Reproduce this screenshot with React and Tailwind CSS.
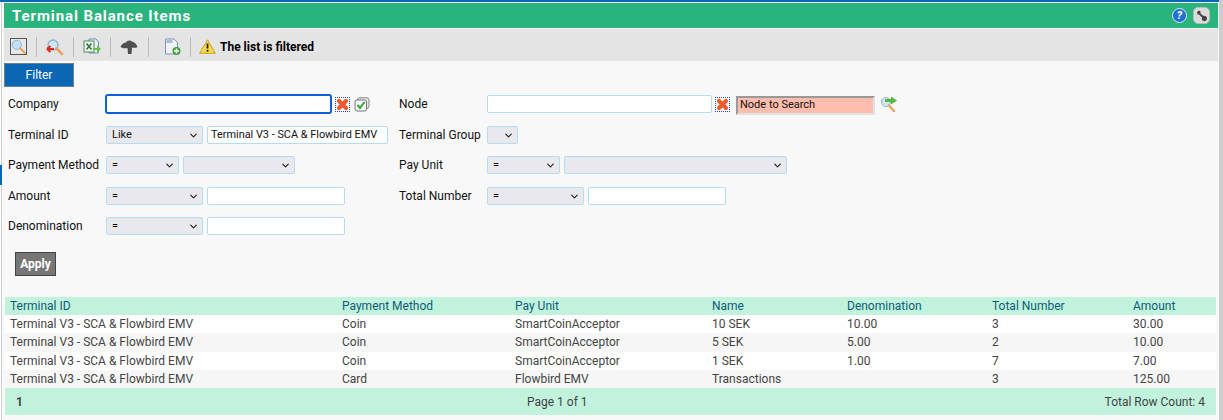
import React from 'react';
import { ChevronDown } from 'lucide-react';

// Toolbar and inline icons
const MagnifierIcon = ({ accent }) => (
  <svg width="18" height="18" viewBox="0 0 18 18">
    <circle cx="7" cy="7" r="5" fill="#cfe6f5" stroke="#8fb4cc" strokeWidth="1.4" />
    <path d="M10.5 10.5 L16 16" stroke="#e9a35c" strokeWidth="2.6" strokeLinecap="round" />
    {accent}
  </svg>
);

const SearchBoxIcon = () => (
  <span className="flex h-[17px] w-[17px] items-center justify-center border border-[#555] bg-[#e8e8e8]">
    <svg width="15" height="15" viewBox="0 0 18 18">
      <circle cx="7" cy="7" r="5.5" fill="#bfe0f6" stroke="#8fb4cc" strokeWidth="1.2" />
      <path d="M11 11 L16.5 16.5" stroke="#e9a35c" strokeWidth="2.6" strokeLinecap="round" />
    </svg>
  </span>
);

const ClearFilterIcon = () => (
  <MagnifierIcon accent={<path d="M1 11 H8 M1 11 L4.5 8 M1 11 L4.5 14" stroke="#d9281e" strokeWidth="2" fill="none" />} />
);

const ExportIcon = () => (
  <svg width="18" height="18" viewBox="0 0 18 18">
    <path d="M6 1 H13 L15.500 4 V15 H6 Z" fill="#e6eef6" stroke="#6f8fb4" />
    <rect x="1" y="3" width="10" height="11" fill="#f4f8f2" stroke="#4c8a55" />
    <path d="M3.500 5.500 L8.500 11.500 M8.500 5.500 L3.500 11.500" stroke="#2b7a3a" strokeWidth="1.600" />
    <path d="M10 10 H14 V7.500 L18 11 L14 14.500 V12 H10 Z" fill="#6cc04a" />
  </svg>
);

const UploadCloudIcon = () => (
  <svg width="18" height="16" viewBox="0 0 18 16">
    <path d="M0.500 8 C1.500 5 4 3.500 6 3.500 C7 1.500 10 0.500 12 2.500 C14.500 3 16.500 5 17.500 8 C16 9 13.500 9 12 8.500 L11.500 15 H8 L7.500 9 C5.500 9.500 2.500 9.500 0.500 8 Z" fill="#4f4f4f" />
  </svg>
);

const NewPageIcon = () => (
  <svg width="17" height="18" viewBox="0 0 17 18">
    <path d="M1.500 1 H10 L13.500 4.500 V16 H1.500 Z" fill="#eef2f8" stroke="#7f93b2" />
    <rect x="2.500" y="2" width="6" height="3" fill="#a9bcd6" />
    <circle cx="12.500" cy="13" r="4" fill="#3f9e36" />
    <path d="M12.500 10.500 V15.500 M10 13 H15" stroke="#fff" strokeWidth="1.600" />
  </svg>
);

const WarningIcon = () => (
  <svg width="17" height="15" viewBox="0 0 17 15">
    <path d="M8.500 0.800 L16.400 14.300 H0.600 Z" fill="#f7d94c" stroke="#c9a227" strokeLinejoin="round" />
    <path d="M8.500 4.500 V9.500" stroke="#222" strokeWidth="1.800" />
    <rect x="7.600" y="10.800" width="1.800" height="1.800" fill="#222" />
  </svg>
);

const ClearIcon = () => (
  <span className="flex h-[15px] w-[15px] items-center justify-center border border-dotted border-[#1e50b4]">
    <svg width="13" height="13" viewBox="0 0 13 13">
      <path d="M3 3 L10 10 M10 3 L3 10" stroke="#ee5a2b" strokeWidth="4.200" strokeLinecap="round" />
    </svg>
  </span>
);

const CheckIcon = () => (
  <svg width="16" height="15" viewBox="0 0 16 15">
    <rect x="3.500" y="0.800" width="11.500" height="10.500" rx="2" fill="#e4e4e4" stroke="#888" />
    <rect x="1" y="3" width="11.500" height="11" rx="2" fill="#f5f5f5" stroke="#777" />
    <path d="M3.500 8 L6 11 L10.500 5" stroke="#2fa83a" strokeWidth="2" fill="none" />
  </svg>
);

const NodeSearchIcon = () => (
  <svg width="18" height="16" viewBox="0 0 18 16">
    <circle cx="6" cy="6" r="4.500" fill="#cfe6f5" stroke="#8fb4cc" />
    <path d="M9 9.500 L14 15" stroke="#e9a35c" strokeWidth="2.400" strokeLinecap="round" />
    <path d="M5 3 H11 V0.500 L17 4.500 L11 8.500 V6 H5 Z" fill="#55b83a" />
  </svg>
);

const HelpIcon = () => (
  <span className="flex h-[15px] w-[15px] items-center justify-center rounded-full border border-[#dfe8f5] bg-[#1f6fd6] text-[11px] font-bold italic leading-none text-white">?</span>
);

const ToolsIcon = () => (
  <span className="flex h-[17px] w-[17px] items-center justify-center rounded-[5px] border border-[#bbb] bg-[#dcdcdc]">
    <svg width="12" height="12" viewBox="0 0 12 12">
      <path d="M1 2 L3 0.500 L4.500 1.500 L4.500 3.500 L7.500 6 C9 5.500 11 6.500 11 8.500 C11 10.500 9 11.500 7.500 11 C6 10.500 5.500 9 6 7.500 L3 4.500 L1.500 4.500 Z" fill="#444" />
    </svg>
  </span>
);

const ToolbarSep = () => <span className="mx-[9px] h-[20px] w-px bg-[#bdbdbd]" />;

const Select = ({ value = '', width }) => (
  <div className={`flex h-[18px] items-center justify-between rounded-[2px] border border-[#b5dcf7] bg-[#e9e9ed] pl-[5px] pr-[3px] text-[11px] text-[#111] ${width}`}>
    <span>{value}</span>
    <ChevronDown size={11} strokeWidth={2.500} className="text-[#222]" />
  </div>
);

const TextInput = ({ value = '', width }) => (
  <div className={`flex h-[18px] items-center rounded-[2px] border border-[#b5dcf7] bg-white px-[3px] text-[10.9px] text-[#111] ${width}`}>
    {value}
  </div>
);

const Label = ({ children, width }) => (
  <span className={`shrink-0 text-[12px] text-[#111] ${width}`}>{children}</span>
);

const columns = ['Terminal ID', 'Payment Method', 'Pay Unit', 'Name', 'Denomination', 'Total Number', 'Amount'];
const widths = ['w-[332px]', 'w-[173px]', 'w-[197px]', 'w-[135px]', 'w-[145px]', 'w-[141px]', 'w-[88px]'];

const terminal = 'Terminal V3 - SCA & Flowbird EMV';
const rows = [
  [terminal, 'Coin', 'SmartCoinAcceptor', '10 SEK', '10.00', '3', '30.00'],
  [terminal, 'Coin', 'SmartCoinAcceptor', '5 SEK', '5.00', '2', '10.00'],
  [terminal, 'Coin', 'SmartCoinAcceptor', '1 SEK', '1.00', '7', '7.00'],
  [terminal, 'Card', 'Flowbird EMV', 'Transactions', '', '3', '125.00'],
];

export default function App() {
  return (
    <div className="relative h-[420px] w-[1223px] overflow-hidden bg-white font-['Roboto',sans-serif]">
      <div className="mr-[4px] h-[2px] bg-[#0a67b3]" />

      <div className="ml-[1px] mr-[4px] border-l border-[#cfcfcf] bg-[#f8f8f8]">
        <div className="bg-white pl-[2px] pr-[1px] pt-px">
          <div className="flex h-[25px] items-center justify-between bg-[#29b47e] pl-[8px] pr-[8px]">
            <h1 className="pt-[1px] text-[15px] font-bold tracking-[0.9px] text-white">Terminal Balance Items</h1>
            <div className="flex items-center gap-[6px]">
              <HelpIcon />
              <ToolsIcon />
            </div>
          </div>
        </div>

        <div className="ml-[2px] mr-px mt-[1px] flex h-[32px] items-center bg-[#e4e4e4] pl-[6px] pt-[3px]">
          <SearchBoxIcon />
          <ToolbarSep />
          <ClearFilterIcon />
          <ToolbarSep />
          <ExportIcon />
          <ToolbarSep />
          <UploadCloudIcon />
          <span className="w-px" />
          <ToolbarSep />
          <span className="ml-[6px]"><NewPageIcon /></span>
          <ToolbarSep />
          <span className="-ml-px flex items-center gap-[4px] text-[12px] font-bold text-black">
            <WarningIcon />
            The list is filtered
          </span>
        </div>

        <div className="ml-[2px] mt-[2px]">
          <div className="flex h-[24px] w-[70px] items-center justify-center border border-[#6d7f8e] bg-[#0a67b3] text-[12px] text-white">Filter</div>
        </div>

        <div className="ml-[6px] mt-[7px] flex flex-col">
          <div className="flex h-[20px] items-center">
            <Label width="w-[97px]">Company</Label>
            <div className="h-[20px] w-[227px] rounded-[3px] border-2 border-[#0b5fd8] bg-white" />
            <span className="ml-[3px] flex items-center gap-[4px]"><ClearIcon /><CheckIcon /></span>
            <Label width="ml-[29px] w-[88px]">Node</Label>
            <TextInput width="w-[225px]" />
            <span className="ml-[3px]"><ClearIcon /></span>
            <div className="ml-[6px] mt-[2px] flex h-[19px] w-[139px] items-center border-2 border-b-[#e2e2e2] border-l-[#999] border-r-[#e2e2e2] border-t-[#999] bg-[#ffbdae] pl-[2px] pt-[1px] text-[11px] text-[#111]">Node to Search</div>
            <span className="ml-[5px]"><NodeSearchIcon /></span>
          </div>

          <div className="mt-[12px] flex h-[18px] items-center">
            <Label width="w-[98px]">Terminal ID</Label>
            <Select value="Like" width="w-[97px]" />
            <span className="ml-[4px]"><TextInput value={terminal} width="w-[181px]" /></span>
            <Label width="ml-[11px] w-[88px]">Terminal Group</Label>
            <Select width="w-[31px]" />
          </div>

          <div className="mt-[12px] flex h-[18px] items-center">
            <Label width="w-[98px]">Payment Method</Label>
            <Select value="=" width="w-[73px]" />
            <span className="ml-[4px]"><Select width="w-[112px]" /></span>
            <Label width="ml-[104px] w-[88px]">Pay Unit</Label>
            <Select value="=" width="w-[73px]" />
            <span className="ml-[4px]"><Select width="w-[223px]" /></span>
          </div>

          <div className="mt-[13px] flex h-[18px] items-center">
            <Label width="w-[98px]">Amount</Label>
            <Select value="=" width="w-[97px]" />
            <span className="ml-[4px]"><TextInput width="w-[138px]" /></span>
            <Label width="ml-[54px] w-[88px]">Total Number</Label>
            <Select value="=" width="w-[97px]" />
            <span className="ml-[4px]"><TextInput width="w-[138px]" /></span>
          </div>

          <div className="mt-[12px] flex h-[18px] items-center">
            <Label width="w-[98px]">Denomination</Label>
            <Select value="=" width="w-[97px]" />
            <span className="ml-[4px]"><TextInput width="w-[138px]" /></span>
          </div>

          <button className="ml-[7px] mt-[17px] flex h-[24px] w-[41px] items-center justify-center border border-[#444] bg-[#777] text-[12px] font-bold text-white">Apply</button>
        </div>

        <div className="ml-[3px] mr-[2px] mt-[21px]">
          <table className="w-[1211px] table-fixed border-collapse text-left text-[12px] text-[#444]">
            <thead>
              <tr className="h-[18px] bg-[#c1f2dc] text-[#0f5c7a]">
                {columns.map((col, i) => (
                  <th key={col} className={`p-0 pl-[5px] font-normal ${widths[i]}`}>{col}</th>
                ))}
              </tr>
            </thead>
            <tbody>
              {rows.map((row, r) => (
                <tr key={r} className={r % 2 === 0 ? 'h-[18px] bg-white' : 'h-[18.500px] bg-[#f6f6f6]'}>
                  {row.map((cell, c) => (
                    <td key={c} className="p-0 pl-[5px]">{cell}</td>
                  ))}
                </tr>
              ))}
            </tbody>
          </table>
          <div className="grid h-[27px] w-[1211px] grid-cols-[511px_1fr_auto] items-center bg-[#c1f2dc] pl-[11px] pr-[11px] text-[12px] text-[#444]">
            <span className="font-bold">1</span>
            <span>Page 1 of 1</span>
            <span>Total Row Count: 4</span>
          </div>
        </div>
        <div className="h-[20px]" />
      </div>

      {/* page scrollbar and side marker */}
      <div className="absolute bottom-0 right-0 top-0 w-[4px] bg-[#cdcdcd]" />
      <div className="absolute left-0 top-[165px] h-[20px] w-[2px] bg-[#0a67b3]" />
    </div>
  );
}
